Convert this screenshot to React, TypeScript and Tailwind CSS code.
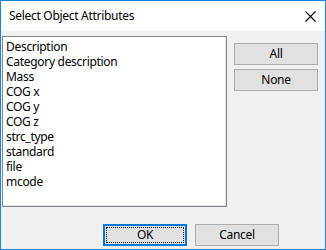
import React from "react";

const items = [
  "Description",
  "Category description",
  "Mass",
  "COG x",
  "COG y",
  "COG z",
  "strc_type",
  "standard",
  "file",
  "mcode",
];

export default function App() {
  return (
    <div
      className="w-[326px] h-[250px] border border-[#1883d7] flex flex-col bg-[#f0f0f0] text-black tracking-[-0.3px]"
      style={{ fontFamily: '"Noto Sans", "Open Sans", sans-serif' }}
    >
      <div className="h-[30px] bg-white flex items-center justify-between pl-[8px] pr-[9px] shrink-0">
        <span className="text-[12px] leading-none">Select Object Attributes</span>
        <svg width="11" height="11" viewBox="0 0 11 11">
          <path d="M0.5 0.5 L10.5 10.5 M10.5 0.5 L0.5 10.5" stroke="#000" strokeWidth="1.1" fill="none" />
        </svg>
      </div>
      <div className="flex-1 flex flex-col">
        <div className="flex pt-[5px]">
          <div className="ml-[1px] w-[225px] h-[171px] border border-[#828790] bg-white">
            <div className="w-full h-full border-r border-b border-[#e3e3e3] pl-[3px] pt-[2px]">
              {items.map((t) => (
                <div key={t} className="h-[15px] text-[12px] leading-[15px] whitespace-nowrap">
                  {t}
                </div>
              ))}
            </div>
          </div>
          <div className="ml-[7px] pt-[7px] flex flex-col gap-[4px]">
            <button className="w-[84px] h-[22px] bg-[#e1e1e1] border border-[#adadad] text-[12px] leading-none flex items-center justify-center">
              All
            </button>
            <button className="w-[84px] h-[22px] bg-[#e1e1e1] border border-[#adadad] text-[12px] leading-none flex items-center justify-center">
              None
            </button>
          </div>
        </div>
        <div className="flex gap-[8px] ml-[102px] mt-[17px]">
          <button className="w-[84px] h-[22px] bg-[#e1e1e1] border-2 border-[#0078d7] text-[12px] leading-none flex items-center justify-center p-[1px]">
            <span className="w-full h-full border border-dotted border-black flex items-center justify-center">
              OK
            </span>
          </button>
          <button className="w-[84px] h-[22px] bg-[#e1e1e1] border border-[#adadad] text-[12px] leading-none flex items-center justify-center">
            Cancel
          </button>
        </div>
      </div>
    </div>
  );
}
